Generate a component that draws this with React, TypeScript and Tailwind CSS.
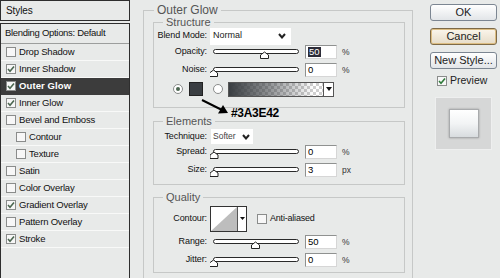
import React from "react";

const items = [
  { label: "Drop Shadow", checked: false },
  { label: "Inner Shadow", checked: true },
  { label: "Outer Glow", checked: true, active: true },
  { label: "Inner Glow", checked: true },
  { label: "Bevel and Emboss", checked: false },
  { label: "Contour", checked: false, indent: true },
  { label: "Texture", checked: false, indent: true },
  { label: "Satin", checked: false },
  { label: "Color Overlay", checked: false },
  { label: "Gradient Overlay", checked: true },
  { label: "Pattern Overlay", checked: false },
  { label: "Stroke", checked: true },
];

const Check = ({ checked, color = "#4b6650" }: { checked?: boolean; color?: string }) => (
  <div className="w-[10px] h-[10px] shrink-0 border border-[#8a8c8b] bg-[#f7f7f7] flex items-center justify-center">
    {checked && (
      <svg width="8" height="8" viewBox="0 0 8 8">
        <path d="M1 4 L3 6.2 L7 1.5" fill="none" stroke={color} strokeWidth="1.6" />
      </svg>
    )}
  </div>
);

const Chevron = () => (
  <svg width="8" height="6" viewBox="0 0 8 6" className="shrink-0">
    <path d="M1 1 L4 4.5 L7 1" fill="none" stroke="#222" strokeWidth="2" />
  </svg>
);

const Slider = ({ at }: { at: number }) => (
  <svg width="92" height="14" viewBox="0 0 92 14" className="ml-[3px] shrink-0">
    <rect x="3.5" y="4.5" width="85" height="4" rx="2" fill="#fff" stroke="#2a2a2a" />
    <path
      d={`M${at} 7 L${at + 4} 10 L${at + 4} 13.5 L${at - 4} 13.5 L${at - 4} 10 Z`}
      fill="#fff"
      stroke="#222"
    />
  </svg>
);

const Field = ({ value, unit, selected }: { value: string; unit: string; selected?: boolean }) => (
  <>
    <div className="ml-[3px] w-[32px] h-[14px] bg-white border border-[#8f9190] border-r-[#d6d6d6] border-b-[#d6d6d6] flex items-center pl-[2px] text-[9.5px] leading-none">
      {selected ? <span className="bg-[#2c2c38] text-white px-[1px]">{value}</span> : value}
    </div>
    <span className="ml-[5px] text-[8.5px] text-[#333]">{unit}</span>
  </>
);

const Label = ({ children }: { children: React.ReactNode }) => (
  <div className="w-[53px] shrink-0 text-right text-[9px] tracking-[-0.1px] text-[#111]">{children}</div>
);

const SliderRow = ({ label, at, value, unit, selected, className = "" }: { label: string; at: number; value: string; unit: string; selected?: boolean; className?: string }) => (
  <div className={`h-[14px] flex items-center ${className}`}>
    <Label>{label}</Label>
    <Slider at={at} />
    <Field value={value} unit={unit} selected={selected} />
  </div>
);

const Radio = ({ on, className = "" }: { on?: boolean; className?: string }) => (
  <div className={`w-[10px] h-[10px] shrink-0 rounded-full border border-[#8a8c8b] bg-white flex items-center justify-center ${className}`}>
    {on && <div className="w-[4px] h-[4px] rounded-full bg-[#4b6650]" />}
  </div>
);

const Button = ({ children, primary, className = "" }: { children: React.ReactNode; primary?: boolean; className?: string }) => (
  <div
    className={`w-[67px] h-[17px] rounded-[3px] border flex items-center justify-center text-[11px] text-[#222] bg-linear-to-b ${
      primary
        ? "border-[#7d6a48] from-[#fbf6ec] to-[#e6dcc8] shadow-[inset_0_0_0_1px_#dcbd82]"
        : "border-[#7c8692] from-white to-[#e2e5e8]"
    } ${className}`}
  >
    {children}
  </div>
);

export default function App() {
  return (
    <div className="relative w-[500px] h-[278px] overflow-hidden bg-[#e8eae9] flex font-['Liberation_Sans',Arial,sans-serif]">
      {/* styles list */}
      <div className="w-[130px] shrink-0 flex flex-col">
        <div className="h-[21px] border border-[#2e2e2e] flex items-center pl-[5px] text-[10px] text-[#111] tracking-[-0.1px]">Styles</div>
        <div className="mt-[2px] flex-1 border-x border-t border-[#2e2e2e]">
          <div className="h-[20px] border-b border-[#9c9e9d] flex items-center pl-[4px] text-[9.5px] tracking-[-0.3px] text-[#111]">
            Blending Options: Default
          </div>
          {items.map((it) => (
            <div
              key={it.label}
              className={`h-[17px] border-b flex items-center gap-[3px] text-[9.5px] ${
                it.indent ? "pl-[15px]" : "pl-[5px]"
              } ${it.active ? "bg-[#3c3c3c] border-[#3c3c3c] text-white font-bold tracking-[0.1px]" : "border-[#f8f9f8] text-[#111] tracking-[-0.2px]"}`}
            >
              <Check checked={it.checked} />
              <span>{it.label}</span>
            </div>
          ))}
        </div>
      </div>

      {/* outer glow group */}
      <fieldset className="ml-[13px] mt-[3px] w-[270px] shrink-0 self-start border border-[#c6c8c7] pl-[9px] pb-[20px]">
        <legend className="ml-[1px] px-[3px] text-[12px] leading-[14px] text-[#555]">Outer Glow</legend>

        <fieldset className="-mt-[2px] w-[252px] border border-[#c6c8c7] pb-[10px]">
          <legend className="ml-[9px] px-[3px] text-[11px] leading-[14px] text-[#555]">Structure</legend>
          <div className="-mt-[2px] h-[18px] flex items-center">
            <Label>Blend Mode:</Label>
            <div className="ml-[3px] w-[81px] h-[17px] bg-white flex items-center justify-between pl-[3px] pr-[5px] text-[9px] text-[#222]">
              Normal
              <Chevron />
            </div>
          </div>
          <SliderRow label="Opacity:" at={54.5} value="50" unit="%" selected />
          <SliderRow label="Noise:" at={3.5} value="0" unit="%" className="mt-[4px]" />
          <div className="mt-[4px] h-[16px] flex items-center">
            <Radio on className="ml-[19px]" />
            <div className="ml-[6px] w-[14px] h-[14px] bg-[#3a3e42] border border-[#222]" />
            <Radio className="ml-[10px]" />
            <div className="ml-[5px] w-[106px] h-[15px] border border-[#555] flex">
              <div className="flex-1 bg-[repeating-conic-gradient(#cfcfcf_0%_25%,#ffffff_0%_50%)] bg-[length:6px_6px]">
                <div className="w-full h-full bg-linear-to-r from-[#3a3e42] via-[#3a3e42]/60 via-40% to-transparent to-90%" />
              </div>
              <div className="w-[10px] bg-white border-l border-[#555] flex items-center justify-center">
                <svg width="6" height="4" viewBox="0 0 6 4"><path d="M0 0 H6 L3 4 Z" fill="#111" /></svg>
              </div>
            </div>
          </div>
        </fieldset>

        <fieldset className="mt-[6px] w-[252px] border border-[#c6c8c7] pb-[7px]">
          <legend className="ml-[9px] px-[3px] text-[11px] leading-[14px] text-[#555]">Elements</legend>
          <div className="h-[17px] flex items-center">
            <Label>Technique:</Label>
            <div className="ml-[4px] w-[42px] h-[15px] bg-white flex items-center justify-between pl-[2px] pr-[3px] text-[8.5px] text-[#444]">
              Softer
              <Chevron />
            </div>
          </div>
          <SliderRow label="Spread:" at={4} value="0" unit="%" />
          <SliderRow label="Size:" at={4} value="3" unit="px" className="mt-[4px]" />
        </fieldset>

        <fieldset className="mt-[5px] w-[252px] border border-[#c6c8c7] pb-[5px]">
          <legend className="ml-[9px] px-[3px] text-[11px] leading-[14px] text-[#555]">Quality</legend>
          <div className="mt-[2px] h-[26px] flex items-center">
            <Label>Contour:</Label>
            <svg width="37" height="26" viewBox="0 0 37 26" className="ml-[3px] shrink-0">
              <rect x="0.5" y="0.5" width="36" height="25" fill="#fff" stroke="#333" />
              <path d="M1 25 L27 1 L27 25 Z" fill="#bdbdbd" />
              <line x1="27.5" y1="1" x2="27.5" y2="25" stroke="#555" />
              <path d="M30 11 H35 L32.5 14 Z" fill="#111" />
            </svg>
            <div className="ml-[10px]">
              <Check />
            </div>
            <span className="ml-[3px] text-[9px] tracking-[-0.2px] text-[#111]">Anti-aliased</span>
          </div>
          <SliderRow label="Range:" at={45.5} value="50" unit="%" className="mt-[3px]" />
          <SliderRow label="Jitter:" at={3.5} value="0" unit="%" className="mt-[4px]" />
        </fieldset>
      </fieldset>

      {/* buttons + preview */}
      <div className="flex-1 pl-[17px] pt-[4px] flex flex-col">
        <Button>OK</Button>
        <Button primary className="mt-[7px]">Cancel</Button>
        <Button className="mt-[7px]">New Style...</Button>
        <div className="mt-[6px] ml-[7px] h-[11px] flex items-center gap-[3px]">
          <Check checked color="#2f7a3a" />
          <span className="text-[10.5px] text-[#222]">Preview</span>
        </div>
        <div className="mt-[11px] ml-[5px] w-[57px] h-[53px] bg-[#d6d7d7] border border-[#eeefef] flex items-center justify-center">
          <div className="w-[30px] h-[29px] border border-[#a9abad] bg-linear-to-b from-white via-[#f2f4f5] to-[#d8dcdf] shadow-[0_0_2px_#999]" />
        </div>
      </div>

      {/* annotation */}
      <svg width="34" height="20" viewBox="0 0 34 20" className="absolute left-[198px] top-[96px]">
        <line x1="4" y1="4" x2="24" y2="14" stroke="#000" strokeWidth="2" />
        <path d="M30 17 L20 17.5 L25 9 Z" fill="#000" />
      </svg>
      <div className="absolute left-[231px] top-[106px] text-[12px] leading-[14px] font-bold tracking-[-0.3px] text-black">#3A3E42</div>
    </div>
  );
}
